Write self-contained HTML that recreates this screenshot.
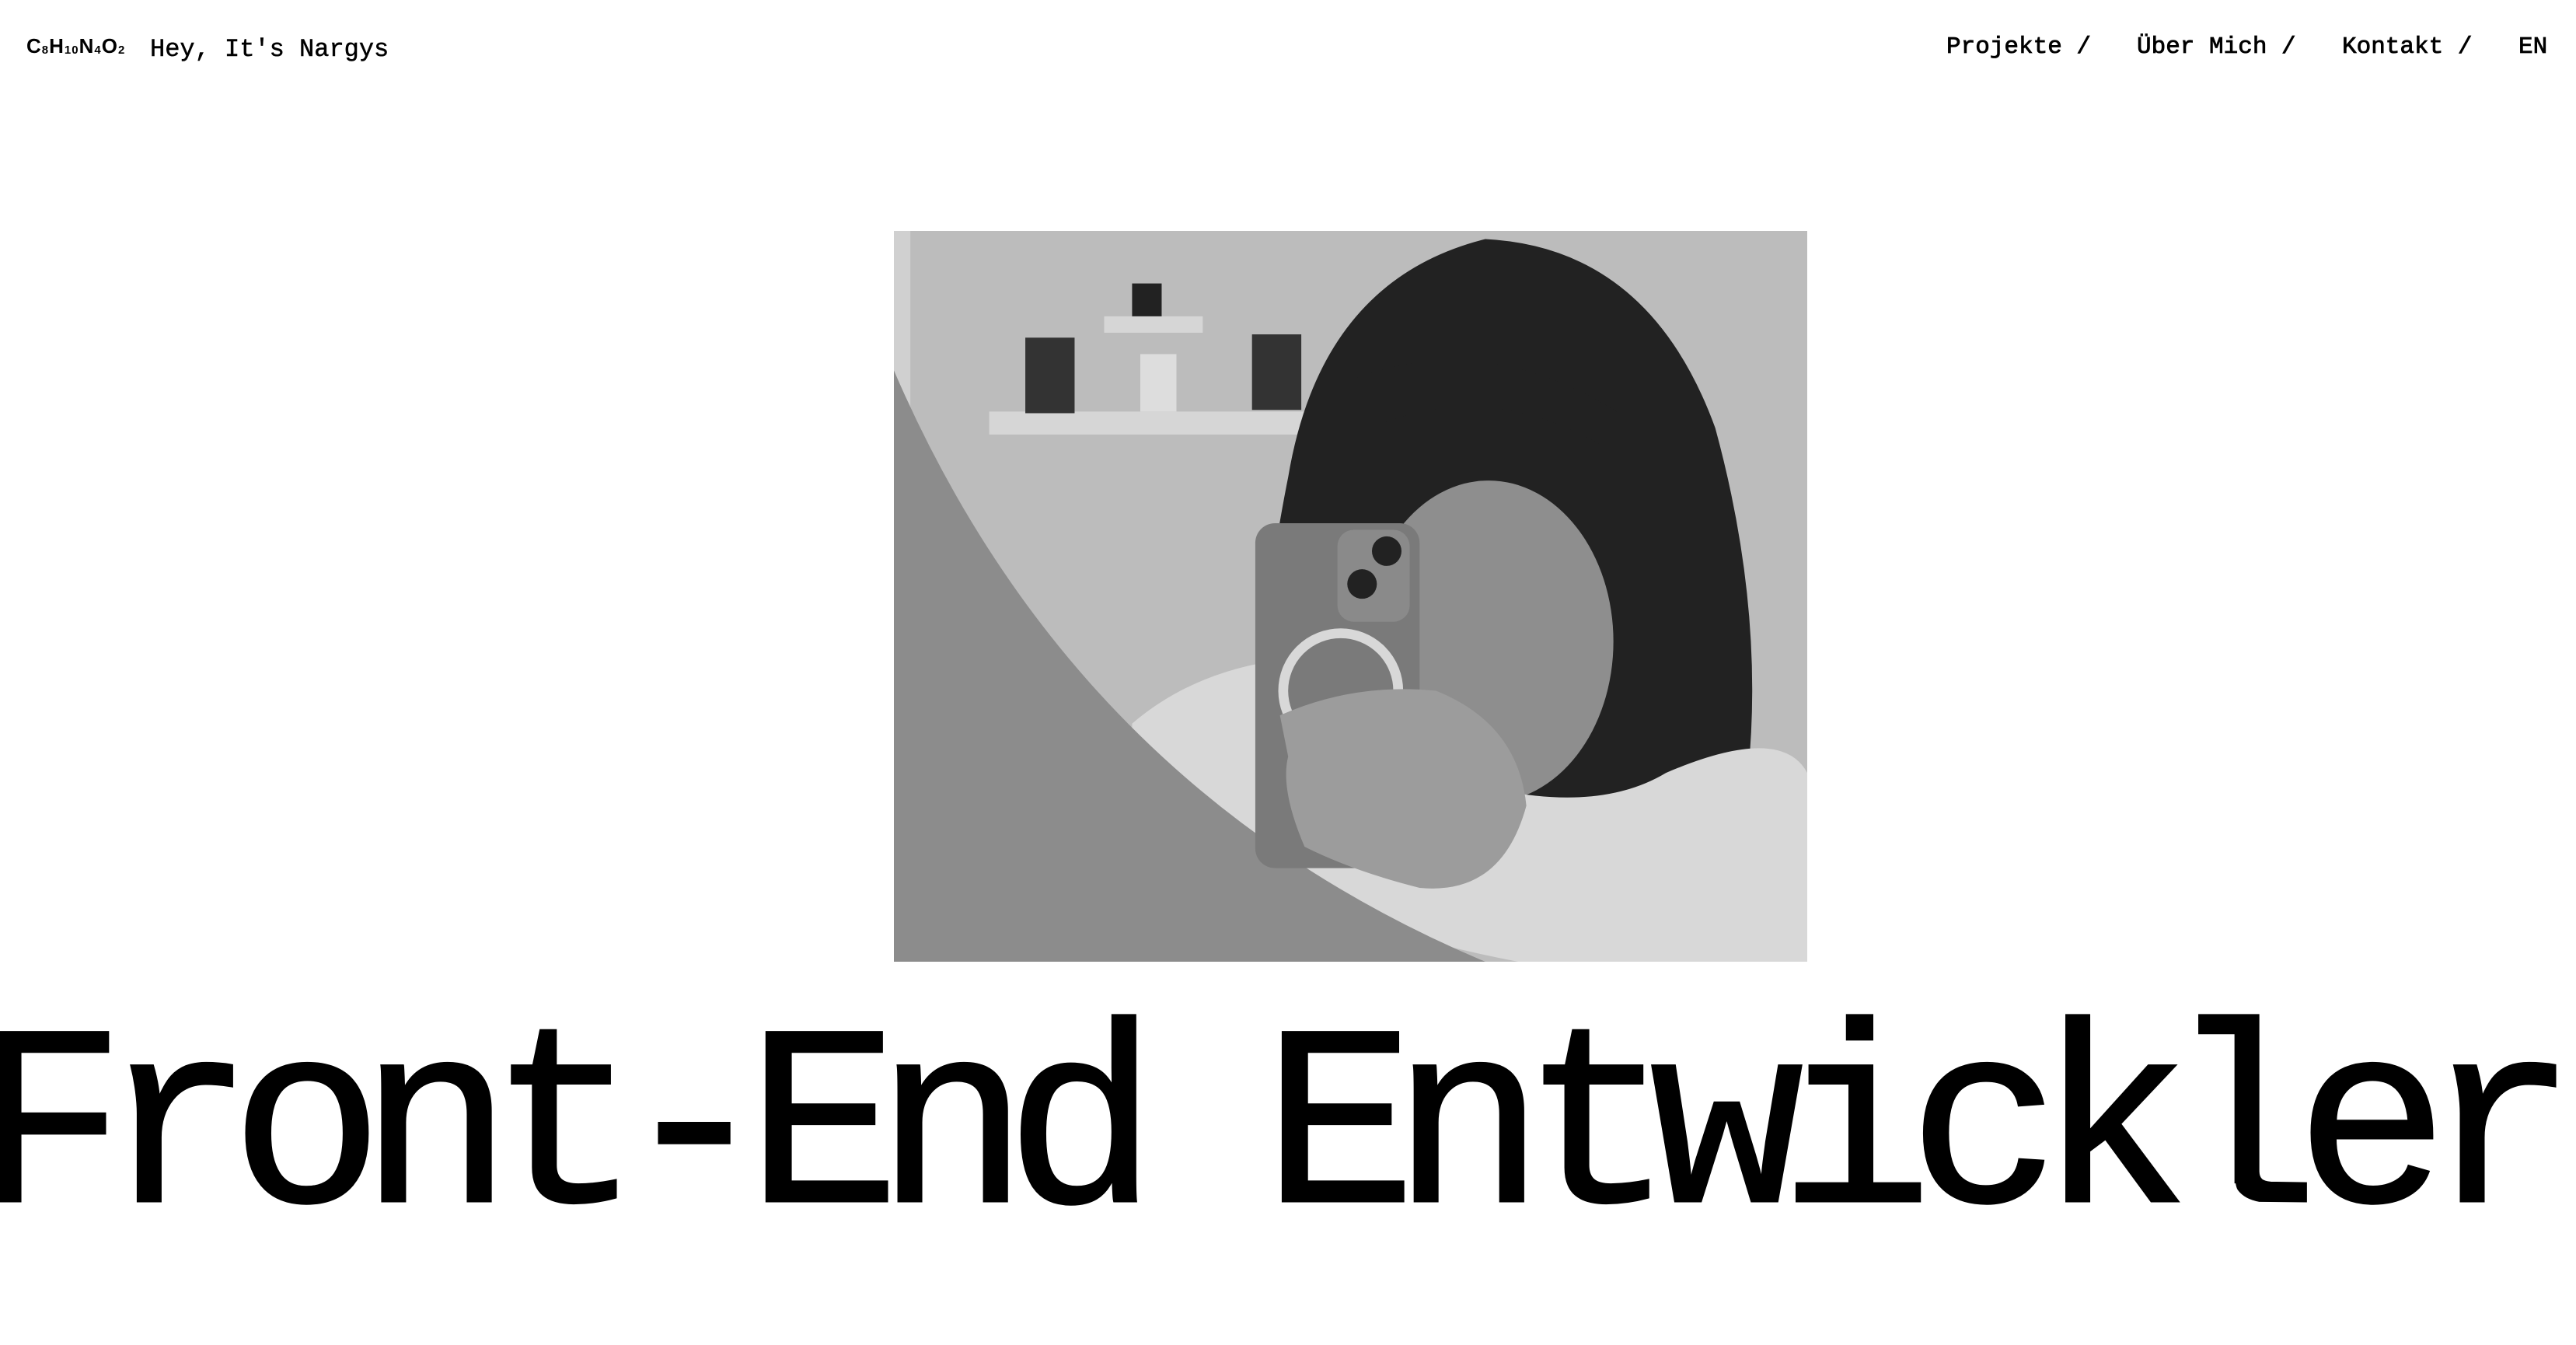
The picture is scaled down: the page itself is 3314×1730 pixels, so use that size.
<!DOCTYPE html>
<html><head><meta charset="utf-8"><style>
html,body{margin:0;padding:0;background:#fff;width:3314px;height:1730px;overflow:hidden;position:relative;font-family:"Liberation Mono","DejaVu Sans Mono",monospace;color:#000}
.t{position:absolute;white-space:nowrap}
.logo{left:34px;top:44px;font-size:26px;font-weight:bold;font-family:"Liberation Sans",sans-serif;letter-spacing:1px}
.logo sub{font-size:15px;vertical-align:-1px}
.hey{left:193px;top:45px;font-size:32px;-webkit-text-stroke:0.5px #000}
.nav{top:43px;font-size:31px;-webkit-text-stroke:0.8px #000}
h1{position:absolute;margin:0;left:-36px;top:1258px;font-size:330px;font-weight:normal;letter-spacing:-32px;line-height:400px;white-space:nowrap;font-family:"Liberation Mono",monospace;-webkit-text-stroke:3px #000}
.ph{position:absolute;left:1150px;top:297px;width:1175px;height:940px}
</style></head><body>
<div class="t logo">C<sub>8</sub>H<sub>10</sub>N<sub>4</sub>O<sub>2</sub></div>
<div class="t hey">Hey, It's Nargys</div>
<div class="t nav" style="left:2504px">Projekte /</div>
<div class="t nav" style="left:2749px">Über Mich /</div>
<div class="t nav" style="left:3013px">Kontakt /</div>
<div class="t nav" style="left:3240px">EN</div>
<svg class="ph" viewBox="0 0 556 445" preserveAspectRatio="none">
<rect width="556" height="445" fill="#bcbcbc"/>
<rect x="0" y="0" width="10" height="445" fill="#d0d0d0"/>
<rect x="58" y="110" width="210" height="14" fill="#d6d6d6"/>
<rect x="128" y="52" width="60" height="10" fill="#d6d6d6"/>
<rect x="145" y="32" width="18" height="20" fill="#222"/>
<rect x="80" y="65" width="30" height="46" fill="#333"/>
<rect x="218" y="63" width="30" height="46" fill="#333"/>
<rect x="150" y="75" width="22" height="35" fill="#ddd"/>
<path d="M220,280 Q230,200 240,150 Q260,30 360,5 Q460,10 500,120 Q530,230 520,330 L500,400 L280,400 Z" fill="#222"/>
<ellipse cx="362" cy="250" rx="76" ry="98" fill="#8e8e8e"/>
<path d="M280,90 Q360,60 440,110 L430,130 Q360,90 290,120 Z" fill="#222"/>
<path d="M145,300 Q180,270 230,262 L330,330 Q420,360 470,330 Q540,300 556,330 L556,445 L380,445 Q250,420 145,360 Z" fill="#d8d8d8"/>
<path d="M0,85 Q110,340 360,445 L0,445 Z" fill="#8c8c8c"/>
<rect x="220" y="178" width="100" height="210" rx="12" fill="#7a7a7a"/>
<rect x="270" y="182" width="44" height="56" rx="10" fill="#8a8a8a"/>
<circle cx="300" cy="195" r="9" fill="#222"/><circle cx="285" cy="215" r="9" fill="#222"/>
<circle cx="272" cy="280" r="35" fill="none" stroke="#d8d8d8" stroke-width="6"/>
<path d="M235,295 Q280,275 330,280 Q380,300 385,350 Q370,405 320,400 Q280,390 250,375 Q235,340 240,320 Z" fill="#9c9c9c"/>
</svg>
<h1>Front-End Entwickler</h1>
</body></html>
